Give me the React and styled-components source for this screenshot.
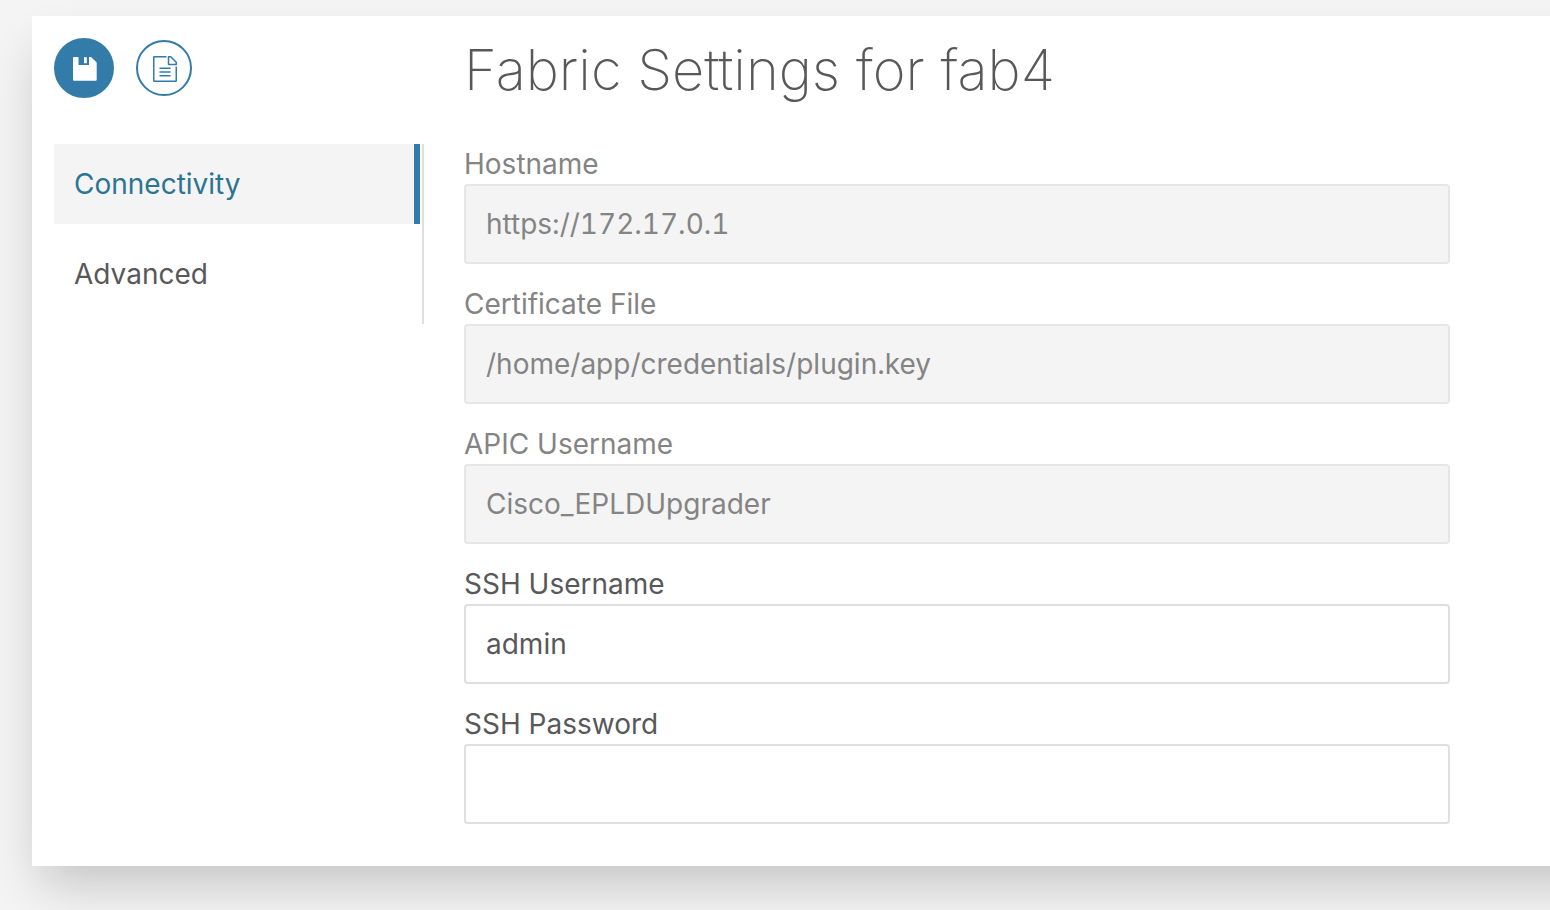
import React, { useState } from "react";
import styled, { createGlobalStyle } from "styled-components";

const color = {
  brand: "#337ba9",
  link: "#2b7592",
  text: "#58585b",
  muted: "#848484",
  page: "#f4f4f4",
  line: "#dfdfdf",
};

const GlobalStyle = createGlobalStyle`
  *, *::before, *::after { box-sizing: border-box; }
  body {
    margin: 0;
    background: ${color.page};
    color: ${color.text};
    font-family: Inter, "Liberation Sans", sans-serif;
    font-size: 28px;
    line-height: 40px;
  }
`;

const Page = styled.div`
  overflow: hidden;
  min-height: 100vh;
  padding: 16px 0 44px 32px;
`;

const Card = styled.main`
  width: calc(100% + 96px);
  padding: 0 196px 42px 22px;
  background: #fff;
  box-shadow: 0 26px 48px -8px rgba(0, 0, 0, 0.2);
`;

const Columns = styled.div`
  display: grid;
  grid-template-columns: 370px minmax(0, 1fr);
  column-gap: 40px;
  align-items: start;
`;

const Header = styled(Columns).attrs({ as: "header" })`
  height: 128px;
`;

const Toolbar = styled.div`
  display: flex;
  align-items: center;
  gap: 22px;
  padding-top: 22px;
`;

const CircleButton = styled.button`
  display: flex;
  align-items: center;
  justify-content: center;
  width: ${(p) => (p.$filled ? 60 : 56)}px;
  height: ${(p) => (p.$filled ? 60 : 56)}px;
  padding: 2px 0 0 2px;
  border: 2px solid ${color.brand};
  border-radius: 50%;
  background: ${(p) => (p.$filled ? color.brand : "#fff")};
  color: ${(p) => (p.$filled ? "#fff" : color.brand)};
  cursor: pointer;
`;

const Title = styled.h1`
  margin: 0;
  padding-top: 18px;
  font-size: 56px;
  font-weight: 200;
  line-height: 72px;
  white-space: nowrap;
`;

const Tabs = styled.nav`
  display: flex;
  flex-direction: column;
  gap: 10px;
  padding: 0 2px 10px 0;
  border-right: 2px solid ${color.line};
`;

const Tab = styled.a`
  padding: 20px;
  border-right: 6px solid ${(p) => (p.$active ? color.brand : "transparent")};
  background: ${(p) => (p.$active ? color.page : "transparent")};
  color: ${(p) => (p.$active ? color.link : color.text)};
  text-decoration: none;
`;

const Form = styled.form`
  display: flex;
  flex-direction: column;
  gap: 20px;
`;

const Field = styled.div`
  display: flex;
  flex-direction: column;
  color: ${(p) => (p.$disabled ? color.muted : color.text)};
`;

const Input = styled.input`
  width: 100%;
  height: 80px;
  padding: 0 20px;
  border: 2px solid ${color.line};
  border-radius: 4px;
  background: #fff;
  color: inherit;
  font: inherit;
  font-variant-numeric: tabular-nums;
  outline: none;

  &:disabled {
    border-color: #e6e6e6;
    background: ${color.page};
  }
`;

const SaveIcon = () => (
  <svg width="24" height="24" viewBox="0 0 24 24" aria-hidden="true">
    <path
      fill="currentColor"
      fillRule="evenodd"
      d="M1 0h4.500v8h10.500V0H18l5.700 5.500V22.700a1 1 0 0 1-1 1H1a1 1 0 0 1-1-1V1a1 1 0 0 1 1-1zM11 .3h2.800v6h-2.800z"
    />
  </svg>
);

const DocumentIcon = () => (
  <svg
    width="24"
    height="26"
    viewBox="0 0 24 26"
    fill="none"
    stroke="currentColor"
    strokeWidth="1.500"
    strokeLinejoin="round"
    aria-hidden="true"
  >
    <path d="M13.500 .75H1.250a.5.500 0 0 0-.5.500V24.750a.5.500 0 0 0 .5.500H22.750a.5.500 0 0 0 .5-.5V10.500" />
    <path d="M15.500 .75V8.500H23.250V6.250L17.750 .75z" />
    <path d="M6.500 12.250h11M6.500 16h11M6.500 19.750h11" />
  </svg>
);

const tabs = [
  { id: "connectivity", label: "Connectivity" },
  { id: "advanced", label: "Advanced" },
];

const fields = [
  { id: "hostname", label: "Hostname", value: "https://172.17.0.1", disabled: true },
  { id: "certificate", label: "Certificate File", value: "/home/app/credentials/plugin.key", disabled: true },
  { id: "apic-user", label: "APIC Username", value: "Cisco_EPLDUpgrader", disabled: true },
  { id: "ssh-user", label: "SSH Username", value: "admin" },
  { id: "ssh-password", label: "SSH Password", value: "", type: "password" },
];

export default function App() {
  const [active, setActive] = useState("connectivity");

  return (
    <>
      <GlobalStyle />
      <Page>
        <Card>
          <Header>
            <Toolbar>
              <CircleButton type="submit" form="settings" $filled aria-label="Save">
                <SaveIcon />
              </CircleButton>
              <CircleButton type="button" aria-label="View document">
                <DocumentIcon />
              </CircleButton>
            </Toolbar>
            <Title>Fabric Settings for fab4</Title>
          </Header>
          <Columns>
            <Tabs>
              {tabs.map((t) => (
                <Tab
                  key={t.id}
                  href={`#${t.id}`}
                  $active={t.id === active}
                  aria-current={t.id === active ? "page" : undefined}
                  onClick={() => setActive(t.id)}
                >
                  {t.label}
                </Tab>
              ))}
            </Tabs>
            <Form id="settings" onSubmit={(e) => e.preventDefault()}>
              {fields.map((f) => (
                <Field key={f.id} $disabled={f.disabled}>
                  <label htmlFor={f.id}>{f.label}</label>
                  <Input
                    id={f.id}
                    type={f.type || "text"}
                    defaultValue={f.value}
                    disabled={f.disabled}
                  />
                </Field>
              ))}
            </Form>
          </Columns>
        </Card>
      </Page>
    </>
  );
}
